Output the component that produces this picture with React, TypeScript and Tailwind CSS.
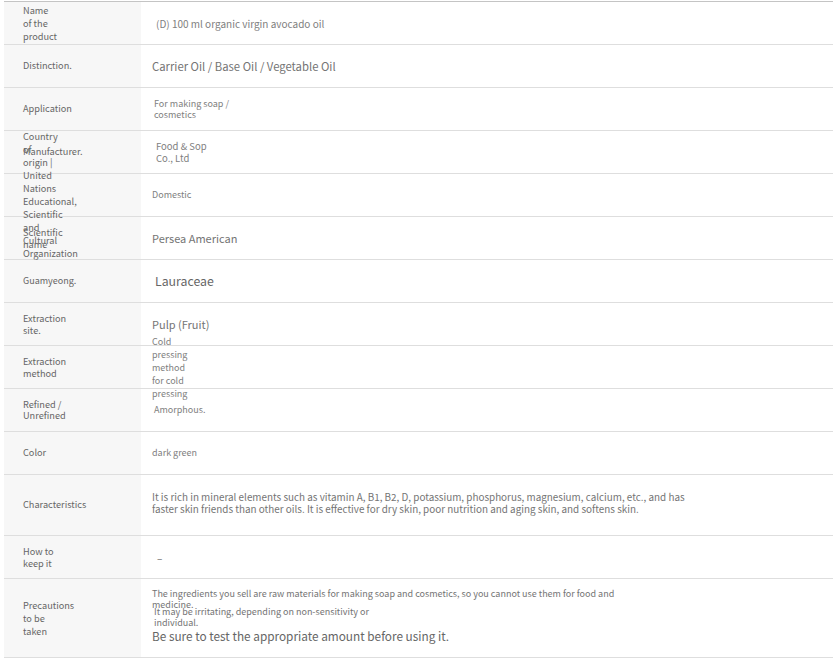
import React from "react";

type Row = {
  h: string;
  label: React.ReactNode;
  value: React.ReactNode;
};

const F = { fontFamily: '"Noto Sans CJK KR", "Noto Sans", sans-serif' };

const lines = (arr: string[], cls: string) => (
  <div className={cls}>
    {arr.map((t, i) => (
      <div key={i} className="whitespace-nowrap">
        {t}
      </div>
    ))}
  </div>
);

const rows: Row[] = [
  {
    h: "h-[43px]",
    label: lines(["Name", "of the", "product"], "leading-[13px]"),
    value: <div className="ml-[4px] text-[10px] text-[#808080]">(D) 100 ml organic virgin avocado oil</div>,
  },
  {
    h: "h-[43px]",
    label: <div>Distinction.</div>,
    value: <div className="text-[11.3px] text-[#747474]">Carrier Oil / Base Oil / Vegetable Oil</div>,
  },
  {
    h: "h-[43px]",
    label: <div>Application</div>,
    value: lines(["For making soap /", "cosmetics"], "ml-[2px] text-[9px] leading-[11px] text-[#808080]"),
  },
  {
    h: "h-[43px]",
    label: <div>Manufacturer.</div>,
    value: lines(["Food & Sop", "Co., Ltd"], "ml-[4px] text-[9.5px] leading-[12px] text-[#808080]"),
  },
  {
    h: "h-[43px]",
    label: lines(
      [
        "Country",
        "of",
        "origin |",
        "United",
        "Nations",
        "Educational,",
        "Scientific",
        "and",
        "Cultural",
        "Organization",
      ],
      "leading-[13px]"
    ),
    value: <div className="text-[9px] text-[#808080]">Domestic</div>,
  },
  {
    h: "h-[43px]",
    label: lines(["Scientific", "name"], "leading-[12px]"),
    value: <div className="text-[11px] text-[#747474]">Persea American</div>,
  },
  {
    h: "h-[43px]",
    label: <div className="text-[9px]">Guamyeong.</div>,
    value: <div className="ml-[3px] text-[12.3px] text-[#666]">Lauraceae</div>,
  },
  {
    h: "h-[43px]",
    label: lines(["Extraction", "site."], "leading-[12px]"),
    value: <div className="text-[11px] text-[#747474]">Pulp (Fruit)</div>,
  },
  {
    h: "h-[43px]",
    label: lines(["Extraction", "method"], "leading-[12px]"),
    value: lines(["Cold", "pressing", "method", "for cold", "pressing"], "text-[9px] leading-[13px] text-[#808080]"),
  },
  {
    h: "h-[43px]",
    label: lines(["Refined /", "Unrefined"], "leading-[11px]"),
    value: <div className="ml-[2px] text-[9px] text-[#808080]">Amorphous.</div>,
  },
  {
    h: "h-[43px]",
    label: <div>Color</div>,
    value: <div className="text-[9px] text-[#808080]">dark green</div>,
  },
  {
    h: "h-[61px]",
    label: <div>Characteristics</div>,
    value: lines(
      [
        "It is rich in mineral elements such as vitamin A, B1, B2, D, potassium, phosphorus, magnesium, calcium, etc., and has",
        "faster skin friends than other oils. It is effective for dry skin, poor nutrition and aging skin, and softens skin.",
      ],
      "mb-[4px] text-[9.9px] leading-[12px] text-[#747474]"
    ),
  },
  {
    h: "h-[43px]",
    label: lines(["How to", "keep it"], "leading-[12px]"),
    value: <div className="ml-[5px] text-[10px] text-[#666]">–</div>,
  },
  {
    h: "h-[79px]",
    label: lines(["Precautions", "to be", "taken"], "leading-[13px]"),
    value: (
      <div className="mt-[-4px]">
        {lines(
          [
            "The ingredients you sell are raw materials for making soap and cosmetics, so you cannot use them for food and",
            "medicine.",
          ],
          "text-[9px] leading-[11px] text-[#747474]"
        )}
        {lines(
          ["It may be irritating, depending on non-sensitivity or", "individual."],
          "mt-[-4px] ml-[2px] text-[9px] leading-[11px] text-[#747474]"
        )}
        <div className="whitespace-nowrap text-[11.8px] leading-[16px] text-[#666]">
          Be sure to test the appropriate amount before using it.
        </div>
      </div>
    ),
  },
];

export default function App() {
  return (
    <div className="w-[835px] h-[659px] overflow-hidden bg-white" style={F}>
      <div className="ml-[4px] mr-[2px] mt-px border-t border-[#c4c4c4]">
        {rows.map((r, i) => (
          <div key={i} className={`flex border-b border-[#dedede] ${r.h}`}>
            <div className="flex w-[137px] shrink-0 items-center bg-[#f7f7f7] pl-[19px] text-[9.2px] text-[#666]">
              <div className="relative">{r.label}</div>
            </div>
            <div className="flex min-w-0 flex-1 items-center pl-[11px]">
              <div className="relative">{r.value}</div>
            </div>
          </div>
        ))}
      </div>
    </div>
  );
}
